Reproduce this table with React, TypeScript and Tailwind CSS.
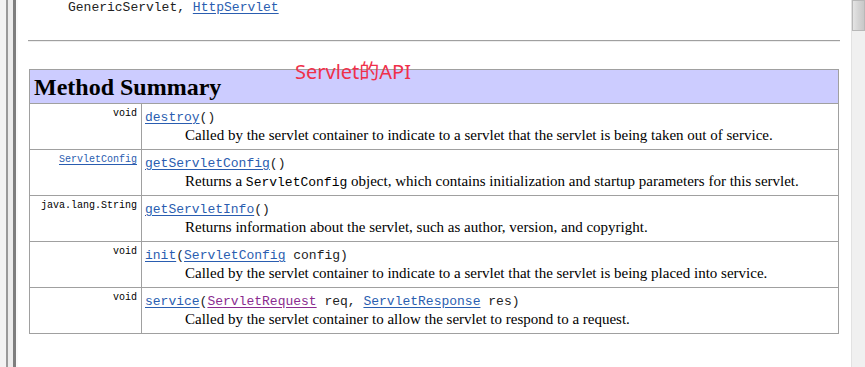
import React from 'react'

const mono = "font-['Liberation_Mono','Courier_New',monospace]"
const serif = "font-['Liberation_Serif','Times_New_Roman',serif]"

type Method = {
  type: React.ReactNode
  sig: React.ReactNode
  desc: React.ReactNode
}

function Link({ children, visited }: { children: React.ReactNode; visited?: boolean }) {
  return (
    <span
      className={
        visited
          ? 'text-[#8a2b8f] underline underline-offset-2'
          : 'text-[#2a5db0] underline underline-offset-2'
      }
    >
      {children}
    </span>
  )
}

const methods: Method[] = [
  {
    type: 'void',
    sig: (
      <>
        <Link>destroy</Link>()
      </>
    ),
    desc: 'Called by the servlet container to indicate to a servlet that the servlet is being taken out of service.',
  },
  {
    type: <Link>ServletConfig</Link>,
    sig: (
      <>
        <Link>getServletConfig</Link>()
      </>
    ),
    desc: (
      <>
        Returns a <span className={`${mono} text-[13px]`}>ServletConfig</span> object, which contains
        initialization and startup parameters for this servlet.
      </>
    ),
  },
  {
    type: 'java.lang.String',
    sig: (
      <>
        <Link>getServletInfo</Link>()
      </>
    ),
    desc: 'Returns information about the servlet, such as author, version, and copyright.',
  },
  {
    type: 'void',
    sig: (
      <>
        <Link>init</Link>(<Link>ServletConfig</Link> config)
      </>
    ),
    desc: 'Called by the servlet container to indicate to a servlet that the servlet is being placed into service.',
  },
  {
    type: 'void',
    sig: (
      <>
        <Link>service</Link>(<Link visited>ServletRequest</Link> req, <Link>ServletResponse</Link> res)
      </>
    ),
    desc: 'Called by the servlet container to allow the servlet to respond to a request.',
  },
]

function Row({ m }: { m: Method }) {
  return (
    <div className="flex h-[46px] border-b border-[#a0a0a0]">
      <div
        className={`${mono} w-[112px] shrink-0 border-r border-[#a0a0a0] pr-[4px] pt-[4px] text-right text-[10px] leading-[12px] text-black`}
      >
        {m.type}
      </div>
      <div className="flex-1 pl-[3px] pt-[6px]">
        <div className={`${mono} whitespace-pre text-[13px] leading-[16px] text-[#222]`}>{m.sig}</div>
        <div className={`${serif} pl-[40px] text-[15px] leading-[19px] text-black`}>{m.desc}</div>
      </div>
    </div>
  )
}

export default function App() {
  return (
    <div className="flex h-[367px] w-[865px] overflow-hidden bg-white">
      {/* left frame edge */}
      <div className="flex w-[18px] shrink-0 bg-[#f3f3f3]">
        <div className="ml-[6px] w-[2px] bg-[#9a9a9a]" />
        <div className="w-[5px] bg-[#ececec]" />
        <div className="w-[3px] bg-[#7e7e7e]" />
        <div className="w-[2px] bg-[#fafafa]" />
      </div>

      {/* page */}
      <div className="relative flex-1">
        <div className={`${mono} pl-[50px] pt-[0px] text-[13px] leading-[15px] text-[#222]`}>
          GenericServlet, <Link>HttpServlet</Link>
        </div>

        <div className="ml-[10px] mr-[11px] mt-[25px] h-[1px] bg-[#a0a0a0]" />
        <div className="ml-[10px] mr-[11px] h-[1px] bg-[#eeeeee]" />

        <div className="ml-[11px] mr-[12px] mt-[27px] border-x border-t border-[#a0a0a0]">
          <div className="flex h-[34px] items-center border-b border-[#a0a0a0] bg-[#ccccff] pl-[4px]">
            <span className={`${serif} text-[24px] font-bold leading-[28px] text-black`}>Method Summary</span>
          </div>
          {methods.map((m, i) => (
            <Row key={i} m={m} />
          ))}
        </div>

        <span className="absolute left-[277px] top-[59px] font-['Noto_Sans','Noto_Sans_CJK_SC',sans-serif] text-[20px] leading-[26px] text-[#f0304a]">
          Servlet的API
        </span>
      </div>

      {/* scrollbar */}
      <div className="flex w-[14px] shrink-0 flex-col border-l border-[#e2e2e2] bg-[#f0f0f0]">
        <div className="h-[31px] border border-[#b8b8b8] bg-gradient-to-r from-[#e4e4e4] via-[#d4d4d4] to-[#c8c8c8]" />
      </div>
    </div>
  )
}
